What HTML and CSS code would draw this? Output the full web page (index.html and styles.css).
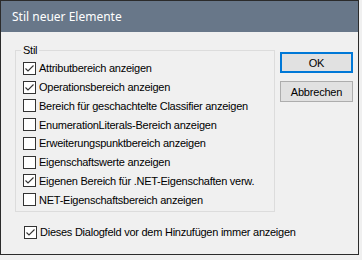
FILE: index.html
```html
<!DOCTYPE html>
<html lang="de">
<head>
<meta charset="utf-8">
<title>Stil neuer Elemente</title>
<link rel="stylesheet" href="styles.css">
</head>
<body>
<div class="window">
  <div class="titlebar">Stil neuer Elemente</div>
  <div class="content">
    <div class="main">
      <fieldset class="group">
        <legend>Stil</legend>
        <label class="cb"><span class="box"><svg viewBox="0 0 11 11"><polyline points="1.5,5.5 4,8 9.5,2.5"/></svg></span>Attributbereich anzeigen</label>
        <label class="cb"><span class="box"><svg viewBox="0 0 11 11"><polyline points="1.5,5.5 4,8 9.5,2.5"/></svg></span>Operationsbereich anzeigen</label>
        <label class="cb"><span class="box"></span>Bereich für geschachtelte Classifier anzeigen</label>
        <label class="cb"><span class="box"></span>EnumerationLiterals-Bereich anzeigen</label>
        <label class="cb"><span class="box"></span>Erweiterungspunktbereich anzeigen</label>
        <label class="cb"><span class="box"></span>Eigenschaftswerte anzeigen</label>
        <label class="cb"><span class="box"><svg viewBox="0 0 11 11"><polyline points="1.5,5.5 4,8 9.5,2.5"/></svg></span>Eigenen Bereich für .NET-Eigenschaften verw.</label>
        <label class="cb"><span class="box"></span>NET-Eigenschaftsbereich anzeigen</label>
      </fieldset>
      <label class="cb standalone"><span class="box"><svg viewBox="0 0 11 11"><polyline points="1.5,5.5 4,8 9.5,2.5"/></svg></span>Dieses Dialogfeld vor dem Hinzufügen immer anzeigen</label>
    </div>
    <div class="buttons">
      <button class="btn default">OK</button>
      <button class="btn">Abbrechen</button>
    </div>
  </div>
</div>
</body>
</html>
```
FILE: styles.css
```css
html, body {
  margin: 0;
  padding: 0;
  background: #f0f0f0;
}
body {
  font-family: "Liberation Sans", Arial, sans-serif;
  font-size: 11px;
  color: #000;
}
.window {
  width: 357px;
  height: 253px;
  border: 1px solid #2b2b2b;
  background: #f0f0f0;
  box-shadow: 0 1px 0 #687789;
  display: flex;
  flex-direction: column;
}
.titlebar {
  height: 31px;
  flex: none;
  background: #687789;
  color: #fff;
  font-family: "Noto Sans", sans-serif;
  font-size: 12px;
  padding-left: 11px;
  display: flex;
  align-items: center;
}
.content {
  flex: 1;
  display: flex;
  padding: 0 5px 0 14px;
}
.main {
  width: 260px;
  display: flex;
  flex-direction: column;
}
.group {
  margin: 12px 0 0;
  padding: 2px 0 2px 7px;
  border: 1px solid #dcdcdc;
  min-width: 0;
}
.group legend {
  padding: 0 2px;
  margin-left: -2px;
  line-height: 13px;
  letter-spacing: -0.25px;
}
.cb {
  display: flex;
  align-items: center;
  height: 18.75px;
  letter-spacing: -0.25px;
  white-space: nowrap;
}
.box {
  width: 13px;
  height: 13px;
  box-sizing: border-box;
  border: 1px solid #333;
  background: #fff;
  margin-right: 3px;
  flex: none;
  display: flex;
}
.box svg {
  width: 11px;
  height: 11px;
}
.box polyline {
  fill: none;
  stroke: #333;
  stroke-width: 1.1;
}
.standalone {
  margin-left: 9px;
  margin-top: 11px;
}
.buttons {
  margin-left: 5px;
  padding-top: 20px;
  display: flex;
  flex-direction: column;
  gap: 8px;
}
.btn {
  width: 73px;
  height: 21px;
  box-sizing: border-box;
  background: #e1e1e1;
  border: 1px solid #adadad;
  border-radius: 0;
  padding: 0;
  font-family: "Liberation Sans", Arial, sans-serif;
  font-size: 11px;
  letter-spacing: -0.2px;
  color: #000;
}
.btn.default {
  border: 2px solid #0078d7;
}
```
